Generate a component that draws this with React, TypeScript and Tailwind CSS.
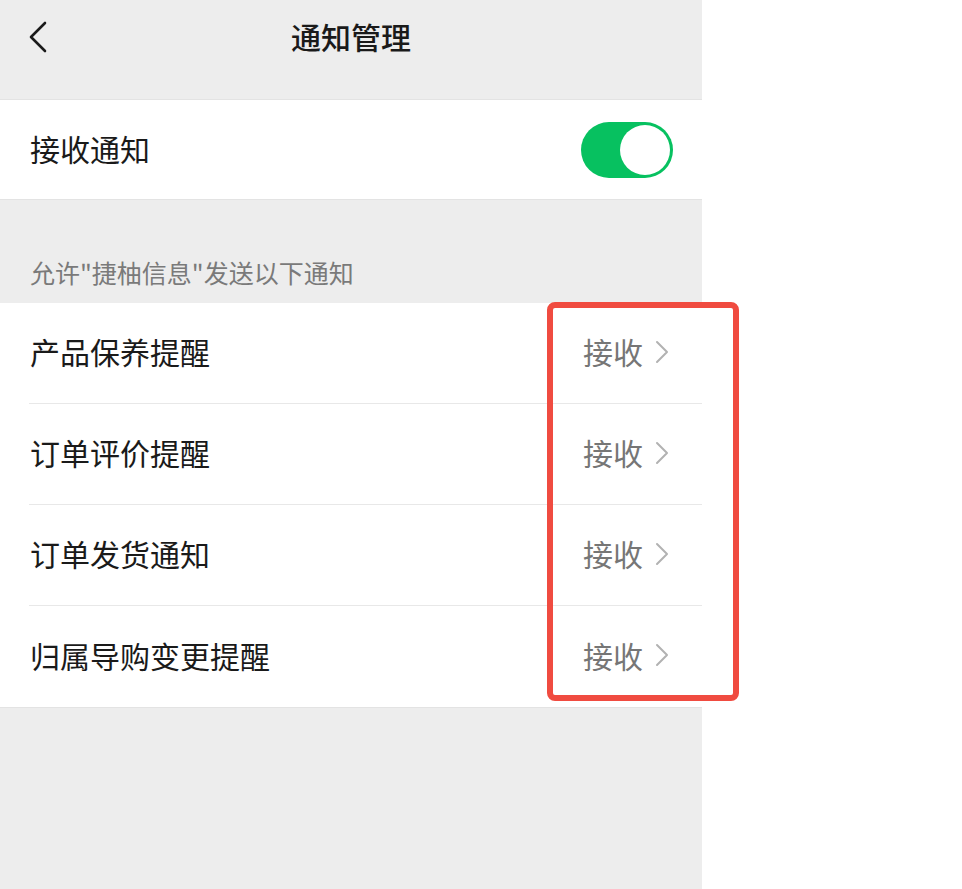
import React from 'react';

const items = ['产品保养提醒', '订单评价提醒', '订单发货通知', '归属导购变更提醒'];

const Chevron: React.FC = () => (
  <svg width="14" height="24" viewBox="0 0 14 24" fill="none" className="ml-[12px]">
    <path d="M2 2 L12 12 L2 22" stroke="#b2b2b2" strokeWidth="2" strokeLinecap="round" strokeLinejoin="round" />
  </svg>
);

const App: React.FC = () => {
  return (
    <div className="flex w-[962px] h-[889px] bg-white font-['Noto_Sans_CJK_SC','Noto_Sans',sans-serif] text-[#1a1a1a]">
      <div className="w-[702px] h-full bg-[#ededed]">
        {/* Header */}
        <div className="h-[99px]">
          <div className="relative flex items-center justify-center h-[73px]">
            <svg width="20" height="32" viewBox="0 0 20 32" fill="none" className="absolute left-[28px] top-[21px]">
              <path d="M17 2 L3 16 L17 30" stroke="#1a1a1a" strokeWidth="2.6" strokeLinecap="round" strokeLinejoin="round" />
            </svg>
            <span className="text-[30px] font-medium">通知管理</span>
          </div>
        </div>

        {/* Master switch */}
        <div className="flex items-center justify-between h-[101px] bg-white border-y border-[#e3e3e3] pl-[30px] pr-[29px]">
          <span className="text-[30px] pb-[3px]">接收通知</span>
          <div className="flex items-center justify-end w-[92px] h-[56px] rounded-full bg-[#07c160] p-[3px]">
            <div className="w-[50px] h-[50px] rounded-full bg-white" />
          </div>
        </div>

        {/* Section label */}
        <div className="h-[103px] pt-[54px] pl-[30px]">
          <span className="text-[25px] leading-[36px] text-[#7a7a7a]">允许"捷柚信息"发送以下通知</span>
        </div>

        {/* List */}
        <div className="relative bg-white border-b border-[#e3e3e3]">
          {items.map((label, i) => (
            <div key={label} className="pl-[29px]">
              <div
                className={`flex items-center justify-between h-[101px] pl-[1px] pr-[33px] pb-[3px] ${
                  i < items.length - 1 ? 'border-b border-[#e8e8e8]' : ''
                }`}
              >
                <span className="text-[30px]">{label}</span>
                <div className="flex items-center">
                  <span className="text-[30px] text-[#767676]">接收</span>
                  <Chevron />
                </div>
              </div>
            </div>
          ))}

          {/* annotation box */}
          <div className="absolute left-[547px] top-[-1px] w-[192px] h-[399px] rounded-[8px] border-[6px] border-[#f04b40]" />
        </div>
      </div>
      <div className="flex-1" />
    </div>
  );
};

export default App;
